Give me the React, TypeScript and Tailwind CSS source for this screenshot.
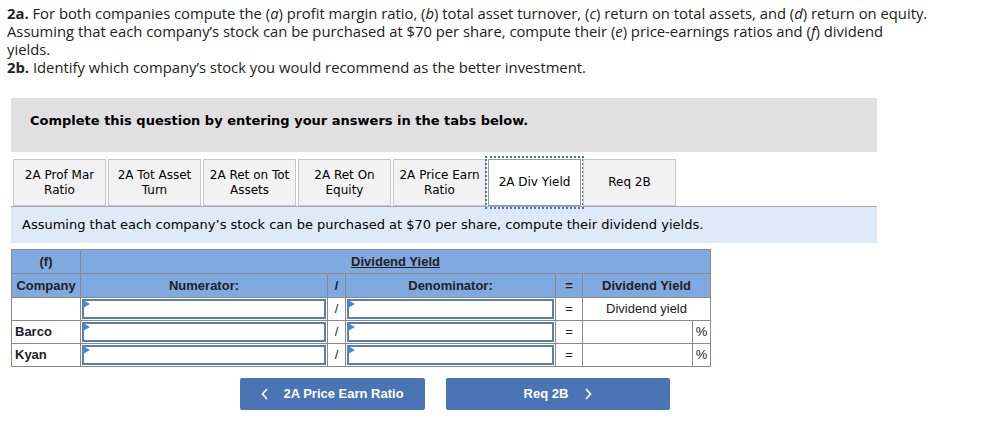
import React from "react";

const tabs = [
  ["2A Prof Mar", "Ratio"],
  ["2A Tot Asset", "Turn"],
  ["2A Ret on Tot", "Assets"],
  ["2A Ret On", "Equity"],
  ["2A Price Earn", "Ratio"],
  ["2A Div Yield"],
  ["Req 2B"],
];

function InputCell() {
  return (
    <td className="border border-[#8a8a8a] p-[1px] h-[22px]">
      <div className="relative h-[20px] border-2 border-[#5a7db3] bg-white">
        <div className="absolute -left-[1px] -top-[1px] w-0 h-0 border-t-[4px] border-b-[4px] border-l-[7px] border-t-transparent border-b-transparent border-l-[#4a86d8]" />
      </div>
    </td>
  );
}

export default function App() {
  return (
    <div className="w-[994px] h-[422px] bg-white relative">
      <div
        className="pl-[7px] pr-[20px] pt-[4px] text-[14.8px] leading-[18px] text-[#222]"
        style={{ fontFamily: "'Open Sans', Lato, sans-serif" }}
      >
        <p>
          <b>2a.</b> For both companies compute the (<i>a</i>) profit margin ratio, (<i>b</i>) total asset turnover, (<i>c</i>) return on total assets, and (<i>d</i>) return on equity.
          <br />
          Assuming that each company’s stock can be purchased at $70 per share, compute their (<i>e</i>) price-earnings ratios and (<i>f</i>) dividend
          <br />
          yields.
        </p>
        <p>
          <b>2b.</b> Identify which company’s stock you would recommend as the better investment.
        </p>
      </div>

      <div className="ml-[11px] w-[866px] mt-[22px]" style={{ fontFamily: "'DejaVu Sans', Verdana, sans-serif" }}>
        <div className="bg-[#e0e0e0] h-[54px] pl-[19px] pt-[13px] text-[13px] font-bold text-black">
          Complete this question by entering your answers in the tabs below.
        </div>

        <div className="mt-[7px] flex gap-[2px] pl-[2px] border-b border-[#a8a8a8] h-[48px]">
          {tabs.map((t, i) => {
            const active = i === 5;
            return (
              <div
                key={i}
                className={
                  "w-[93px] h-[47px] flex flex-col items-center justify-center text-[12px] leading-[15px] text-black border " +
                  (active
                    ? "bg-white border-[#999] outline-2 outline-dotted outline-[#4a73b5] outline-offset-[1px]"
                    : "bg-[#f2f2f2] border-[#c8c8c8]")
                }
              >
                {t.map((l, j) => (
                  <span key={j}>{l}</span>
                ))}
              </div>
            );
          })}
        </div>

        <div className="bg-[#deeaf8] h-[36px] pl-[11px] flex items-center text-[13px] text-black">
          Assuming that each company’s stock can be purchased at $70 per share, compute their dividend yields.
        </div>

        <table
          className="mt-[6px] border-collapse text-[13px] text-[#222] table-fixed"
          style={{ fontFamily: "'Liberation Sans', Arial, sans-serif", width: 699 }}
        >
          <colgroup>
            <col style={{ width: 69 }} />
            <col style={{ width: 247 }} />
            <col style={{ width: 18 }} />
            <col style={{ width: 210 }} />
            <col style={{ width: 27 }} />
            <col style={{ width: 110 }} />
            <col style={{ width: 18 }} />
          </colgroup>
          <tbody>
            <tr className="bg-[#80a9df] font-bold h-[24px]">
              <td className="border border-[#8a8a8a] text-center">(f)</td>
              <td colSpan={6} className="border border-[#8a8a8a] text-center">
                <span className="underline">Dividend Yield</span>
              </td>
            </tr>
            <tr className="bg-[#80a9df] font-bold h-[24px]">
              <td className="border border-[#8a8a8a] text-center">Company</td>
              <td className="border border-[#8a8a8a] text-center">Numerator:</td>
              <td className="border border-[#8a8a8a] text-center">/</td>
              <td className="border border-[#8a8a8a] text-center">Denominator:</td>
              <td className="border border-[#8a8a8a] text-center">=</td>
              <td colSpan={2} className="border border-[#8a8a8a] text-center">Dividend Yield</td>
            </tr>
            <tr className="bg-white">
              <td className="border border-[#8a8a8a]"></td>
              <InputCell />
              <td className="border border-[#8a8a8a] text-center">/</td>
              <InputCell />
              <td className="border border-[#8a8a8a] text-center">=</td>
              <td colSpan={2} className="border border-[#8a8a8a] text-center">Dividend yield</td>
            </tr>
            {["Barco", "Kyan"].map((n) => (
              <tr key={n} className="bg-white">
                <td className="border border-[#8a8a8a] font-bold pl-[3px]">{n}</td>
                <InputCell />
                <td className="border border-[#8a8a8a] text-center">/</td>
                <InputCell />
                <td className="border border-[#8a8a8a] text-center">=</td>
                <td className="border border-[#8a8a8a]"></td>
                <td className="border border-[#8a8a8a] text-center">%</td>
              </tr>
            ))}
          </tbody>
        </table>

        <div
          className="mt-[11px] ml-[229px] flex gap-[21px] text-[13px] font-bold text-white"
          style={{ fontFamily: "'Liberation Sans', Arial, sans-serif" }}
        >
          <div className="w-[185px] h-[32px] bg-[#4a74b3] rounded-[2px] flex items-center justify-center gap-[14px]">
            <svg width="8" height="12" viewBox="0 0 8 12"><path d="M6 1 L1.5 6 L6 11" stroke="white" strokeWidth="1.6" fill="none" /></svg>
            <span>2A Price Earn Ratio</span>
          </div>
          <div className="w-[224px] h-[32px] bg-[#4a74b3] rounded-[2px] flex items-center justify-center gap-[16px]">
            <span>Req 2B</span>
            <svg width="8" height="12" viewBox="0 0 8 12"><path d="M2 1 L6.5 6 L2 11" stroke="white" strokeWidth="1.6" fill="none" /></svg>
          </div>
        </div>
      </div>
    </div>
  );
}
